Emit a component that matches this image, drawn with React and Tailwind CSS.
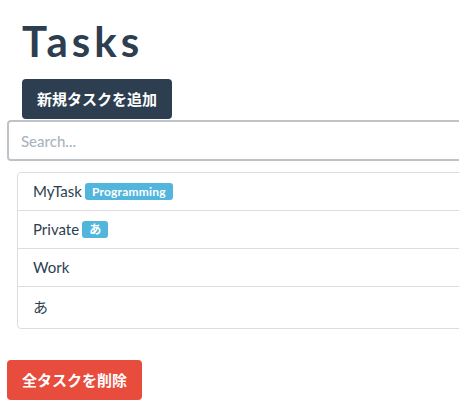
const tasks = [
  { name: "MyTask", tag: "Programming" },
  { name: "Private", tag: "あ" },
  { name: "Work" },
  { name: "あ" },
];

export default function App() {
  return (
    <div className="w-full h-[414px] overflow-hidden bg-white font-['Lato','Noto_Sans_CJK_JP',sans-serif] text-[15px] text-[#2c3e50]">
      <div className="pl-[7px] pt-[20px]">
        <h1 className="ml-[15px] text-[42px] leading-[43px] tracking-[4px] font-bold text-[#2c3e50]">Tasks</h1>
        <button className="ml-[15px] mt-[16px] h-[40px] px-[15px] rounded-[4px] bg-[#2c3e50] text-white font-bold text-[15px] leading-[21px]">
          新規タスクを追加
        </button>
        <input
          type="text"
          placeholder="Search..."
          className="block mt-[1px] w-[700px] h-[41px] px-[12px] rounded-[4px] border-2 border-[#bdc3c7] text-[15px] placeholder:text-[#a9b3bd] placeholder:font-medium outline-none"
        />
        <ul className="mt-[11px] ml-[10px] w-[700px] border border-[#dddddd] rounded-[4px]">
          {tasks.map((t, i) => (
            <li
              key={i}
              className={`px-[15px] ${i === tasks.length - 1 ? "h-[41px]" : "h-[38px] border-b border-[#dddddd]"} flex items-center text-[#2c3e50]`}
            >
              <span>{t.name}</span>
              {t.tag && (
                <span className="ml-[3px] inline-flex items-center h-[17px] px-[7px] rounded-[3px] bg-[#52b6dc] text-white text-[12px] tracking-[0.2px] font-bold leading-none">
                  {t.tag}
                </span>
              )}
            </li>
          ))}
        </ul>
        <button className="mt-[31px] h-[40px] px-[15px] rounded-[4px] bg-[#e74c3c] text-white font-bold text-[15px] leading-[21px]">
          全タスクを削除
        </button>
      </div>
    </div>
  );
}
